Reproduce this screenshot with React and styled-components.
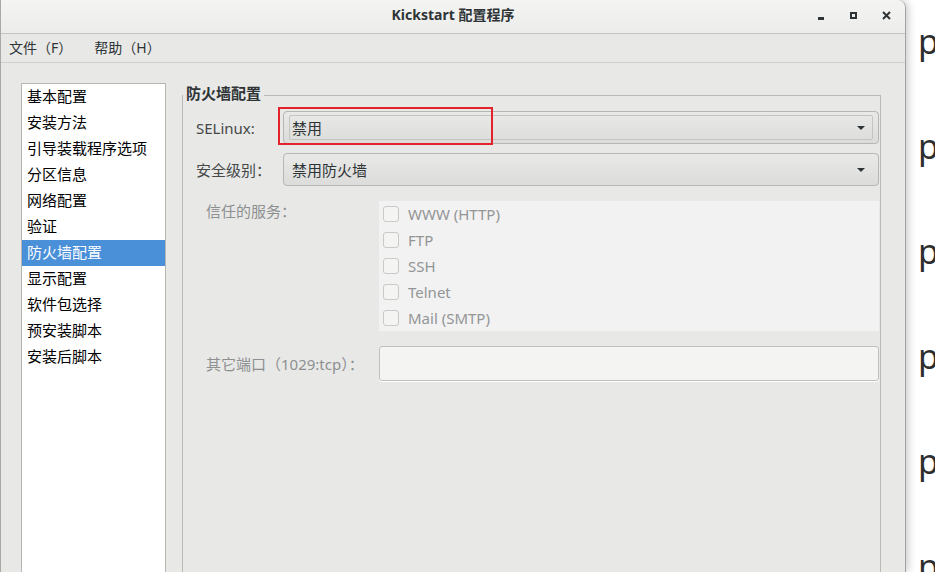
import React from 'react';
import styled, { createGlobalStyle } from 'styled-components';

const SECTIONS = [
  '基本配置',
  '安装方法',
  '引导装载程序选项',
  '分区信息',
  '网络配置',
  '验证',
  '防火墙配置',
  '显示配置',
  '软件包选择',
  '预安装脚本',
  '安装后脚本',
];

const SERVICES = ['WWW (HTTP)', 'FTP', 'SSH', 'Telnet', 'Mail (SMTP)'];

const App = () => (
  <Screen>
    <GlobalStyle />
    <Window>
      <TitleBar>
        <span />
        <Title>Kickstart 配置程序</Title>
        <Controls>
          <Control aria-label="minimize">
            <MinGlyph />
          </Control>
          <Control aria-label="maximize">
            <MaxGlyph />
          </Control>
          <Control aria-label="close">
            <svg width="9" height="9" viewBox="0 0 9 9">
              <path d="M1 1 L8 8 M8 1 L1 8" stroke="#2e3436" strokeWidth="2" />
            </svg>
          </Control>
        </Controls>
      </TitleBar>
      <MenuBar>
        <MenuItem>文件（F）</MenuItem>
        <MenuItem>帮助（H）</MenuItem>
      </MenuBar>
      <Content>
        <SectionList>
          {SECTIONS.map(name => (
            <SectionItem key={name} selected={name === '防火墙配置'}>
              {name}
            </SectionItem>
          ))}
        </SectionList>
        <Frame>
          <Legend>防火墙配置</Legend>
          <ComboRow top={4}>
            <FieldLabel>SELinux:</FieldLabel>
            <Combo>
              <FocusRing />
              <ComboText>禁用</ComboText>
              <Arrow />
              <Highlight />
            </Combo>
          </ComboRow>
          <ComboRow top={9}>
            <FieldLabel>安全级别：</FieldLabel>
            <Combo>
              <ComboText>禁用防火墙</ComboText>
              <Arrow />
            </Combo>
          </ComboRow>
          <WideRow>
            <DimLabel>信任的服务：</DimLabel>
            <ServicePanel>
              {SERVICES.map(s => (
                <ServiceItem key={s}>
                  <CheckBox />
                  <span>{s}</span>
                </ServiceItem>
              ))}
            </ServicePanel>
          </WideRow>
          <WideRow>
            <DimLabel port>其它端口（1029:tcp）：</DimLabel>
            <PortInput />
          </WideRow>
        </Frame>
      </Content>
    </Window>
    <Desktop>
      {[0, 1, 2, 3, 4, 5].map(i => (
        <DesktopLine key={i}>p</DesktopLine>
      ))}
    </Desktop>
  </Screen>
);

export default App;

const GlobalStyle = createGlobalStyle`
  html, body {
    margin: 0;
    padding: 0;
    background: #fff;
  }
  body {
    font-family: "Noto Sans", "Noto Sans CJK SC", sans-serif;
    font-size: 15px;
    color: #2e3436;
  }
`;

const Screen = styled.div`
  display: flex;
  width: 935px;
  height: 572px;
  overflow: hidden;
  background: #fff;
`;

const Window = styled.div`
  position: relative;
  z-index: 1;
  flex: none;
  box-sizing: border-box;
  width: 906px;
  height: 572px;
  display: flex;
  flex-direction: column;
  background: #e8e8e7;
  border-left: 1px solid #a9a9a6;
  border-right: 1px solid #a2a29f;
  border-top-right-radius: 8px;
  box-shadow: 2px 0 8px rgba(0, 0, 0, 0.22);
`;

const TitleBar = styled.div`
  flex: none;
  box-sizing: border-box;
  height: 34px;
  display: grid;
  grid-template-columns: 1fr auto 1fr;
  align-items: center;
  background: linear-gradient(#f4f4f3, #ececeb);
  border-bottom: 1px solid #c3c3c0;
  border-top-right-radius: 8px;
`;

const Title = styled.div`
  font-size: 14px;
  font-weight: 700;
  color: #2e3436;
  line-height: 20px;
  padding-bottom: 3px;
`;

const Controls = styled.div`
  display: flex;
  justify-content: flex-end;
  padding-right: 2px;
  padding-bottom: 2px;
`;

const Control = styled.div`
  width: 33px;
  height: 20px;
  display: flex;
  align-items: center;
  justify-content: center;
`;

const MinGlyph = styled.div`
  width: 6px;
  height: 3px;
  margin-top: 6px;
  background: #2e3436;
`;

const MaxGlyph = styled.div`
  box-sizing: border-box;
  width: 7px;
  height: 7px;
  border: 2px solid #2e3436;
`;

const MenuBar = styled.div`
  flex: none;
  box-sizing: border-box;
  height: 29px;
  display: flex;
  align-items: center;
  gap: 22px;
  padding-left: 8px;
  background: #e8e8e7;
  border-bottom: 1px solid #cfcfcd;
`;

const MenuItem = styled.span`
  font-size: 14px;
  color: #2e3436;
  line-height: 20px;
`;

const Content = styled.div`
  flex: 1;
  min-height: 0;
  display: flex;
  align-items: stretch;
  padding: 20px 24px 0 20px;
  overflow: hidden;
`;

const SectionList = styled.div`
  flex: none;
  box-sizing: border-box;
  width: 145px;
  margin-bottom: -40px;
  background: #fff;
  border: 1px solid #b6b6b3;
`;

const SectionItem = styled.div`
  height: 26px;
  line-height: 24px;
  padding: 0 0 2px 5px;
  box-sizing: border-box;
  font-size: 15px;
  color: ${props => (props.selected ? '#fff' : '#000')};
  background: ${props => (props.selected ? '#4a90d9' : 'transparent')};
  white-space: nowrap;
`;

const Frame = styled.fieldset`
  flex: 1;
  min-width: 0;
  margin: 0 0 -40px 16px;
  padding: 0;
  border: 1px solid #b9b9b6;
`;

const Legend = styled.legend`
  margin-left: 0;
  padding: 0 3px 4px;
  font-size: 15px;
  font-weight: 700;
  line-height: 20px;
  color: #2e3436;
`;

const ComboRow = styled.div`
  display: flex;
  align-items: center;
  margin: ${props => props.top}px 1px 0 13px;
`;

const FieldLabel = styled.div`
  flex: none;
  width: 87px;
  font-size: 15px;
  color: #444849;
`;

const Combo = styled.div`
  position: relative;
  flex: 1;
  box-sizing: border-box;
  height: 33px;
  display: flex;
  align-items: center;
  padding: 0 13px 0 8px;
  background: linear-gradient(#e9e9e8, #dcdcda);
  border: 1px solid #b6b6b3;
  border-radius: 4px;
`;

const FocusRing = styled.div`
  position: absolute;
  left: 5px;
  right: 5px;
  top: 3px;
  bottom: 3px;
  border: 1px solid #c4c4c1;
  border-radius: 2px;
`;

const ComboText = styled.span`
  flex: 1;
  font-size: 15px;
  color: #2e3436;
  line-height: 20px;
`;

const Arrow = styled.span`
  width: 0;
  height: 0;
  border-left: 4.5px solid transparent;
  border-right: 4.5px solid transparent;
  border-top: 4.5px solid #2e3436;
`;

const Highlight = styled.div`
  position: absolute;
  left: -6px;
  top: -5px;
  width: 215px;
  height: 38px;
  box-sizing: border-box;
  border: 2px solid #e3222b;
  pointer-events: none;
`;

const WideRow = styled.div`
  display: flex;
  align-items: center;
  margin: 15px 1px 0 23px;
`;

const DimLabel = styled.div`
  flex: none;
  align-self: ${props => (props.port ? 'center' : 'flex-start')};
  width: 173px;
  font-size: 15px;
  line-height: 20px;
  color: #8d9091;
  white-space: nowrap;
`;

const ServicePanel = styled.div`
  flex: 1;
  padding: 0 4px;
  background: #f2f2f2;
`;

const ServiceItem = styled.div`
  height: 26px;
  display: flex;
  align-items: center;
  gap: 9px;
  font-size: 15px;
  color: #939596;
`;

const CheckBox = styled.span`
  box-sizing: border-box;
  width: 16px;
  height: 16px;
  border: 1px solid #c9c9c6;
  border-radius: 3px;
  background: #f4f4f3;
`;

const PortInput = styled.div`
  flex: 1;
  box-sizing: border-box;
  height: 35px;
  background: #f4f4f2;
  border: 1px solid #c0c0bd;
  border-radius: 3px;
  box-shadow: 0 1px 0 #fff;
`;

const Desktop = styled.div`
  flex: 1;
  padding-left: 12px;
  margin-top: -11px;
`;

const DesktopLine = styled.div`
  height: 105px;
  line-height: 105px;
  font-size: 34px;
  color: #2e2e2e;
`;
